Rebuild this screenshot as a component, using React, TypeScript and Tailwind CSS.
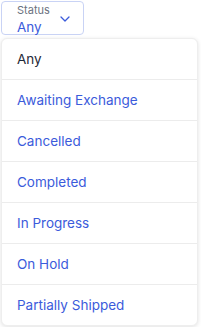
import React from "react";

const items = ["Awaiting Exchange", "Cancelled", "Completed", "In Progress", "On Hold", "Partially Shipped"];

export default function App() {
  return (
    <div className="w-[201px] h-[327px] bg-white relative" style={{ fontFamily: "Inter, 'Noto Sans', sans-serif" }}>
      <div className="pt-px pl-px">
        <div className="w-[83px] h-[34px] border border-[#c9d3f5] rounded-[4px] flex items-start pl-[15px] pr-[13px]">
          <div className="flex flex-col">
            <span className="text-[11px] leading-[13px] text-[#6b7280] mt-[2px]">Status</span>
            <span className="text-[13.5px] leading-[16px] text-[#3b5bdb] mt-[2px]">Any</span>
          </div>
          <svg className="ml-auto mt-[14px]" width="10" height="6" viewBox="0 0 10 6" fill="none">
            <path d="M1 1l4 4 4-4" stroke="#3b5bdb" strokeWidth="1.3" strokeLinecap="round" strokeLinejoin="round" />
          </svg>
        </div>
      </div>
      <div className="absolute left-px top-[38px] w-[197px] bg-white rounded-[6px] border border-[#eeeeee] shadow-[0_1px_4px_rgba(0,0,0,0.12)] overflow-hidden">
        <div className="h-[40px] flex items-center pl-[15px] text-[13.5px] text-[#1f2937]">Any</div>
        {items.map((t) => (
          <div key={t} className="h-[41px] flex items-center pl-[15px] text-[13.5px] text-[#3b5bdb] border-t border-[#ececec]">
            {t}
          </div>
        ))}
      </div>
    </div>
  );
}
